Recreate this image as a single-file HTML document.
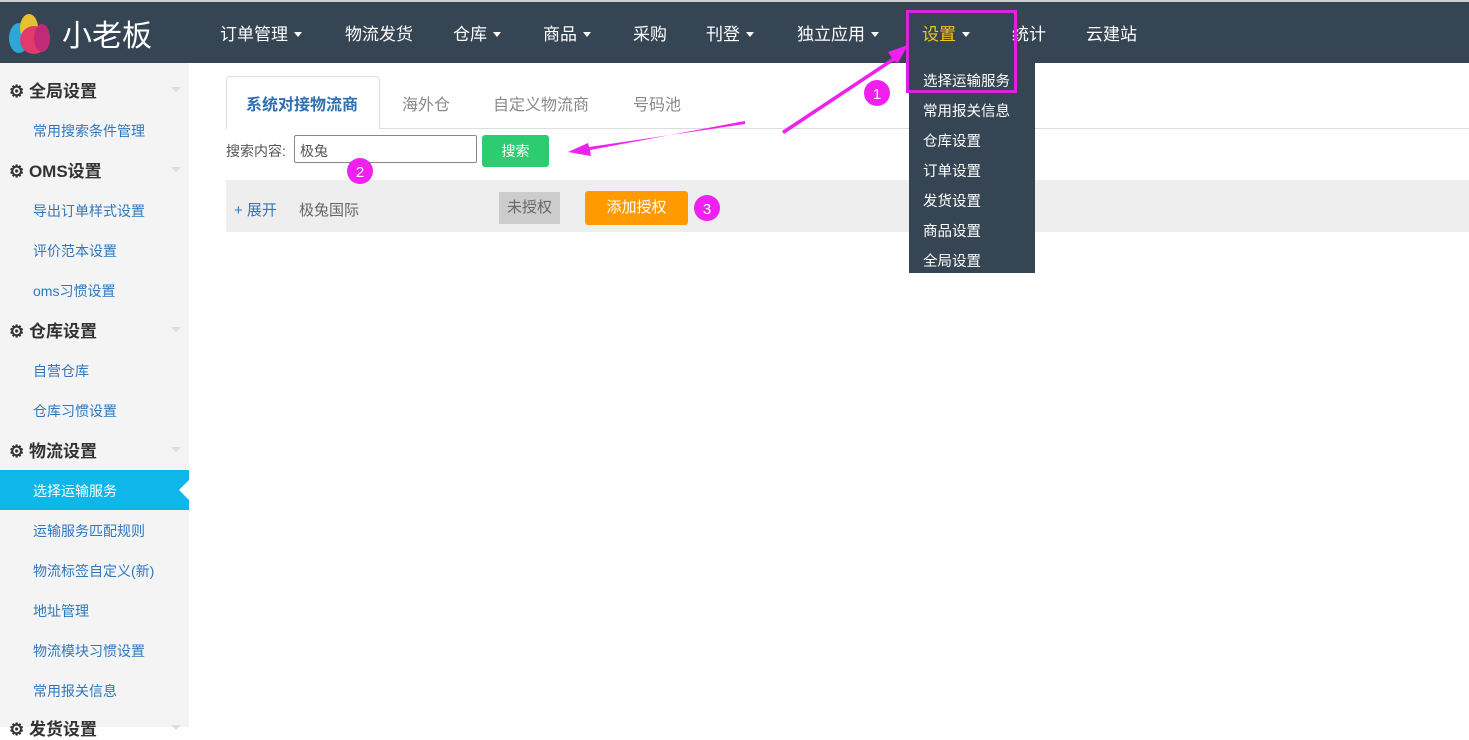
<!DOCTYPE html>
<html><head><meta charset="utf-8"><style>
*{margin:0;padding:0;box-sizing:border-box}
body{width:1469px;height:727px;overflow:hidden;position:relative;background:#fff;font-family:"Liberation Sans","Noto Sans CJK SC",sans-serif;font-size:14px}
.hdr{position:absolute;left:0;top:0;width:1469px;height:63px;background:#364554;border-top:2px solid #ccc}
.nav{position:absolute;top:18px;color:#fff;font-size:17px}
.car{display:inline-block;width:0;height:0;border-left:4px solid transparent;border-right:4px solid transparent;border-top:5px solid #fff;vertical-align:middle;margin-left:6px;margin-top:-3px}
.side{position:absolute;left:0;top:63px;width:189px;height:664px;background:#f4f4f4}
.it{position:absolute;left:33px;color:#2f78c0;font-size:14px}
.hd{position:absolute;left:9px;font-size:17px;font-weight:bold;color:#333}
.hd:after{content:"";position:absolute;left:162px;top:10px;border-left:5px solid transparent;border-right:5px solid transparent;border-top:5px solid #ddd}
.dd{position:absolute;left:909px;top:63px;width:126px;height:210px;background:#364554}
.dd div{position:absolute;left:14px;color:#fff;font-size:14.5px}
</style></head><body>
<div class="hdr">
<svg style="position:absolute;left:5px;top:10px" width="52" height="44" viewBox="0 0 52 44"><ellipse cx="14" cy="26" rx="10" ry="15" fill="#2ba7d8"/><ellipse cx="24" cy="16" rx="9" ry="14" fill="#e6c230"/><ellipse cx="29" cy="28" rx="14" ry="14" fill="#e23a6b"/><ellipse cx="37" cy="26" rx="8" ry="14" fill="#c12a78"/></svg>
<div style="position:absolute;left:62px;top:9px;color:#fff;font-size:30px">小老板</div>
<div class="nav" style="left:220px">订单管理<span class="car"></span></div>
<div class="nav" style="left:345px">物流发货</div>
<div class="nav" style="left:453px">仓库<span class="car"></span></div>
<div class="nav" style="left:543px">商品<span class="car"></span></div>
<div class="nav" style="left:633px">采购</div>
<div class="nav" style="left:706px">刊登<span class="car"></span></div>
<div class="nav" style="left:797px">独立应用<span class="car"></span></div>
<div class="nav" style="left:922px;color:#f5c518">设置<span class="car"></span></div>
<div class="nav" style="left:1012px">统计</div>
<div class="nav" style="left:1086px">云建站</div>
</div>
<div class="side">
<div class="hd" style="top:14px">⚙ 全局设置</div>
<div class="it" style="top:58px">常用搜索条件管理</div>
<div class="hd" style="top:94px">⚙ OMS设置</div>
<div class="it" style="top:138px">导出订单样式设置</div>
<div class="it" style="top:178px">评价范本设置</div>
<div class="it" style="top:218px">oms习惯设置</div>
<div class="hd" style="top:254px">⚙ 仓库设置</div>
<div class="it" style="top:298px">自营仓库</div>
<div class="it" style="top:338px">仓库习惯设置</div>
<div class="hd" style="top:374px">⚙ 物流设置</div>
<div style="position:absolute;left:0;top:407px;width:189px;height:40px;background:#0fb6ea"></div>
<div style="position:absolute;left:179px;top:417px;border-top:10px solid transparent;border-bottom:10px solid transparent;border-right:10px solid #fff"></div>
<div class="it" style="top:418px;color:#fff">选择运输服务</div>
<div class="it" style="top:458px">运输服务匹配规则</div>
<div class="it" style="top:498px">物流标签自定义(新)</div>
<div class="it" style="top:538px">地址管理</div>
<div class="it" style="top:578px">物流模块习惯设置</div>
<div class="it" style="top:618px">常用报关信息</div>
<div class="hd" style="top:652px">⚙ 发货设置</div>
</div>
<div style="position:absolute;left:226px;top:128px;width:1243px;height:1px;background:#ddd"></div>
<div style="position:absolute;left:226px;top:76px;width:154px;height:53px;border:1px solid #ddd;border-bottom:none;border-radius:4px 4px 0 0;background:#fff"></div>
<div style="position:absolute;left:246px;top:91px;color:#2f6fb0;font-size:16px;font-weight:bold">系统对接物流商</div>
<div style="position:absolute;left:402px;top:91px;color:#888;font-size:16px">海外仓</div>
<div style="position:absolute;left:493px;top:91px;color:#888;font-size:16px">自定义物流商</div>
<div style="position:absolute;left:633px;top:91px;color:#888;font-size:16px">号码池</div>
<div style="position:absolute;left:226px;top:141px;color:#555">搜索内容:</div>
<div style="position:absolute;left:294px;top:135px;width:183px;height:28px;border:1px solid #888;border-radius:2px;padding:5px 5px;color:#555">极兔</div>
<div style="position:absolute;left:482px;top:135px;width:67px;height:32px;background:#2ecc71;border-radius:3px;color:#fff;text-align:center;line-height:32px">搜索</div>
<div style="position:absolute;left:226px;top:180px;width:1243px;height:52px;background:#eee"></div>
<div style="position:absolute;left:234px;top:199px;color:#2f78c0;font-size:15px">+ 展开</div>
<div style="position:absolute;left:299px;top:199px;color:#666;font-size:15px">极兔国际</div>
<div style="position:absolute;left:499px;top:192px;width:61px;height:32px;background:#ccc;color:#666;font-size:15px;text-align:center;line-height:32px">未授权</div>
<div style="position:absolute;left:585px;top:191px;width:103px;height:34px;background:#ff9a00;border-radius:3px;color:#fff;font-size:15px;text-align:center;line-height:34px">添加授权</div>
<div class="dd">
<div style="top:7px">选择运输服务</div><div style="top:37px">常用报关信息</div><div style="top:67px">仓库设置</div><div style="top:97px">订单设置</div><div style="top:127px">发货设置</div><div style="top:157px">商品设置</div><div style="top:187px">全局设置</div>
</div>
<div style="position:absolute;left:906px;top:10px;width:111px;height:83px;border:3px solid #e020e0"></div>
<svg style="position:absolute;left:0;top:0" width="1469" height="727">
<polygon points="782,131 892,58 888,52 908,45 898,63 894,61 784,134" fill="#f020f0"/>
<polygon points="745,121 590,150 591,156 568,152 588,143 589,147 745,124" fill="#f020f0"/>
<circle cx="877" cy="93" r="13" fill="#f020f0"/><text x="877" y="99" fill="#fff" font-size="15" text-anchor="middle">1</text>
<circle cx="360" cy="171" r="13" fill="#f020f0"/><text x="360" y="177" fill="#fff" font-size="15" text-anchor="middle">2</text>
<circle cx="707" cy="208" r="13" fill="#f020f0"/><text x="707" y="214" fill="#fff" font-size="15" text-anchor="middle">3</text>
</svg>
</body></html>
